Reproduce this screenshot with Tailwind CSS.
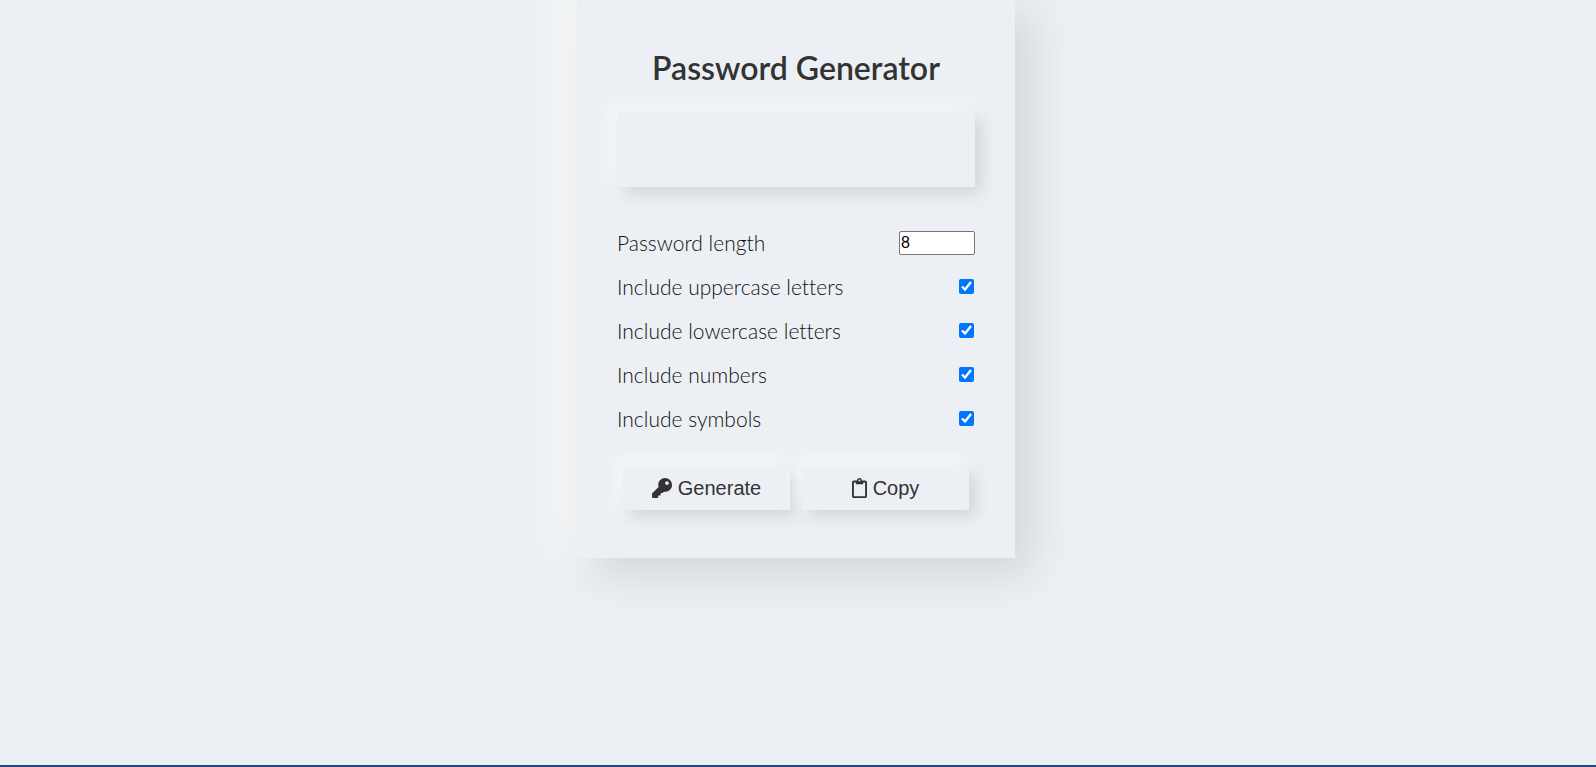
<!DOCTYPE html>
<html lang="en">
<head>
<meta charset="utf-8">
<meta name="viewport" content="width=device-width, initial-scale=1">
<title>Password Generator</title>
<script src="https://cdn.jsdelivr.net/npm/@tailwindcss/browser@4"></script>
</head>
<body class="flex min-h-screen flex-col overflow-hidden bg-[#ecf0f5] font-['Lato',sans-serif] text-[#333]">
<main class="flex flex-1 items-start justify-center pr-1">
  <section class="-mt-2 w-full max-w-[438px] bg-[#ecf0f5] px-10 pt-13 pb-12 shadow-[16px_16px_40px_#d2d4d6,-8px_-8px_40px_#fffdfa]">
    <h1 class="text-center text-[32px] leading-12 font-semibold">Password Generator</h1>
    <output id="result" aria-label="Generated password" class="mt-5 block h-[75px] bg-[#ecf0f5] shadow-[6px_6px_16px_#d0d2d4,-4px_-4px_16px_#fffdfa]"></output>
    <form class="mt-[34px] text-[21px] font-light text-[#111]">
      <div class="flex h-11 items-center justify-between">
        <label for="length" class="[font-variant-ligatures:none]">Password length</label>
        <input id="length" type="number" value="8" min="4" max="20" class="h-6 w-19 rounded-xs border border-[#767676] bg-white px-px pb-px font-['Liberation_Sans',sans-serif] text-base leading-5 text-black">
      </div>
      <div class="flex h-11 items-center justify-between">
        <label for="upper" class="[font-variant-ligatures:none]">Include uppercase letters</label>
        <input id="upper" type="checkbox" checked class="mr-px mb-0.5 size-[15px] accent-[#0075ff]">
      </div>
      <div class="flex h-11 items-center justify-between">
        <label for="lower" class="[font-variant-ligatures:none]">Include lowercase letters</label>
        <input id="lower" type="checkbox" checked class="mr-px mb-0.5 size-[15px] accent-[#0075ff]">
      </div>
      <div class="flex h-11 items-center justify-between">
        <label for="numbers">Include numbers</label>
        <input id="numbers" type="checkbox" checked class="mr-px mb-0.5 size-[15px] accent-[#0075ff]">
      </div>
      <div class="flex h-11 items-center justify-between">
        <label for="symbols">Include symbols</label>
        <input id="symbols" type="checkbox" checked class="mr-px mb-0.5 size-[15px] accent-[#0075ff]">
      </div>
      <div class="mt-[26px] flex gap-3 px-1.5 font-['Liberation_Sans',sans-serif] text-xl text-[#333]">
        <button type="button" class="flex h-[43px] flex-1 items-center justify-center gap-[6px] bg-[#ecf0f5] pb-px shadow-[6px_6px_16px_#d0d2d4,-4px_-4px_16px_#fffdfa]">
          <svg class="size-5" viewBox="0 0 512 512" fill="currentColor" aria-hidden="true"><path d="M512 176.001C512 273.203 433.202 352 336 352c-11.220 0-22.190-1.062-32.827-3.069l-24.012 27.014A23.999 23.999 0 0 1 261.223 384H224v40c0 13.255-10.745 24-24 24h-40v40c0 13.255-10.745 24-24 24H24c-13.255 0-24-10.745-24-24v-78.059c0-6.365 2.529-12.470 7.029-16.971l161.802-161.802C163.108 213.814 160 195.271 160 176 160 78.798 238.797.001 335.999 0 433.488-.001 512 78.511 512 176.001zM336 128c0 26.510 21.490 48 48 48s48-21.490 48-48-21.490-48-48-48-48 21.490-48 48z"/></svg>
          Generate
        </button>
        <button type="button" class="flex h-[43px] flex-1 items-center justify-center gap-[6px] bg-[#ecf0f5] pb-px shadow-[6px_6px_16px_#d0d2d4,-4px_-4px_16px_#fffdfa]">
          <svg class="h-5 w-[15px]" viewBox="0 0 384 512" fill="currentColor" aria-hidden="true"><path d="M336 64h-80c0-35.300-28.700-64-64-64s-64 28.700-64 64H48C21.500 64 0 85.500 0 112v352c0 26.500 21.500 48 48 48h288c26.500 0 48-21.500 48-48V112c0-26.500-21.500-48-48-48zM192 40c13.300 0 24 10.700 24 24s-10.700 24-24 24-24-10.700-24-24 10.700-24 24-24zm144 418c0 3.300-2.700 6-6 6H54c-3.300 0-6-2.700-6-6V118c0-3.300 2.700-6 6-6h42v36c0 6.600 5.400 12 12 12h168c6.600 0 12-5.400 12-12v-36h42c3.300 0 6 2.700 6 6z"/></svg>
          Copy
        </button>
      </div>
    </form>
  </section>
</main>
<footer class="h-[2px] bg-[#234a84]"></footer>
</body>
</html>
